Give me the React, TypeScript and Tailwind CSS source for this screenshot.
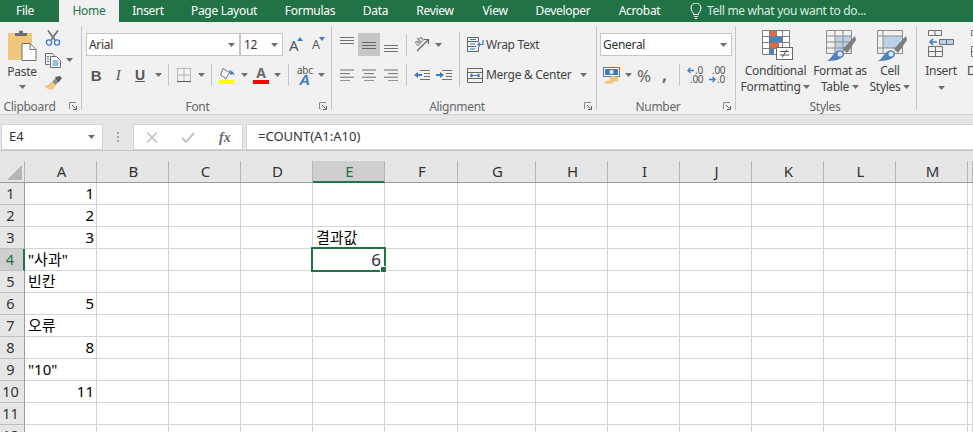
import React from "react";

const UI = '"Noto Sans","Noto Sans CJK KR",sans-serif';

function Caret({ className = "" }: { className?: string }) {
  return (
    <svg width="7" height="4" viewBox="0 0 7 4" className={`block shrink-0 ${className}`}>
      <path d="M0 0H7L3.5 4Z" fill="#6e6e6e" />
    </svg>
  );
}

function Launcher({ className = "" }: { className?: string }) {
  return (
    <svg width="8" height="8" viewBox="0 0 8 8" className={`block shrink-0 ${className}`}>
      <path d="M0.5 7V0.5H7" fill="none" stroke="#8a8a8a" />
      <path d="M3 3L6.5 6.5M7.5 4V7.5H4" fill="none" stroke="#5f5f5f" />
    </svg>
  );
}

function Sep({ className = "" }: { className?: string }) {
  return <div className={`w-px h-[22px] bg-[#c6c6c6] shrink-0 ${className}`} />;
}

function Group({ width, label, labelShift = 0, launcher, children }: { width: string; label: string; labelShift?: number; launcher?: string; children: React.ReactNode }) {
  return (
    <div className={`${width} shrink-0 h-[84px] flex flex-col border-r border-[#c6c6c6]`}>
      <div className="h-[72px] shrink-0">{children}</div>
      <div className="relative flex-1 flex items-center justify-center text-[12px] text-[#666666]">
        <span style={{ transform: `translateX(${labelShift}px)` }}>{label}</span>
        {launcher ? <Launcher className="absolute right-[4px] top-[4px]" /> : null}
      </div>
    </div>
  );
}

function Lines({ rows, width = 14 }: { rows: [number, number][]; width?: number }) {
  return (
    <svg width={width} height="12" viewBox={`0 0 ${width} 12`} className="block shrink-0">
      {rows.map(([x, w], i) => (
        <rect key={i} x={x} y={i * 3.6 + 0.5} width={w} height="1" fill="#707070" />
      ))}
    </svg>
  );
}

const Clipboard = () => (
  <div className="flex pl-[8px] pt-[4px]">
    <div className="w-[28px] flex flex-col items-center">
      <svg width="30" height="31" viewBox="0 0 30 31" className="block shrink-0">
        <rect x="1" y="3" width="24" height="27" fill="#edc87e" />
        <path d="M8 6V3h4V0.8h4V3h4v3Z" fill="#6f6f6f" />
        <path d="M15 13.5h8l6 6v11H15Z" fill="#fff" stroke="#6f6f6f" />
        <path d="M23 13.5v6h6" fill="none" stroke="#6f6f6f" />
      </svg>
      <div className="text-[12px] text-[#444] mt-[3px] leading-[16px]">Paste</div>
      <Caret className="mt-[5px]" />
    </div>
    <div className="ml-[9px] flex flex-col">
      <svg width="16" height="16" viewBox="0 0 16 16" className="block">
        <path d="M3 0.5L10 10M13 0.5L6 10" stroke="#6d6d6d" strokeWidth="1.6" fill="none" />
        <circle cx="4" cy="12.5" r="2.6" fill="none" stroke="#3f7cbf" strokeWidth="1.3" />
        <circle cx="12" cy="12.5" r="2.6" fill="none" stroke="#3f7cbf" strokeWidth="1.3" />
      </svg>
      <div className="flex items-center mt-[7px]">
        <svg width="16" height="15" viewBox="0 0 16 15" className="block">
          <path d="M0.5 0.5h7l2 2v2M0.5 0.5v11h4" fill="none" stroke="#6d6d6d" />
          <path d="M5.5 3.5h6l4 4v7h-10Z" fill="#fff" stroke="#6d6d6d" />
          <path d="M2 3.5h2M2 6h2M2 8.5h2M7.5 8h6M7.5 10h6M7.5 12h6" stroke="#3f7cbf" />
        </svg>
        <Caret className="ml-[5px] -mt-[2px]" />
      </div>
      <svg width="17" height="15" viewBox="0 0 17 15" className="block mt-[8px]">
        <path d="M10 1l5-1 2 2-3 4-2 0Z" fill="#5e5e5e" />
        <path d="M10 2.5L13.5 6.5 10 9 7 6Z" fill="#8d8d8d" />
        <path d="M7 5.5L11 9.5 7 14 1 12 0 9 3 9.5Z" fill="#edc87e" />
      </svg>
    </div>
  </div>
);

const GrowFont = ({ up }: { up: boolean }) => (
  <div className={`relative ${up ? "w-[14px]" : "w-[13px]"} h-[16px]`}>
    <span className={`absolute left-0 bottom-0 ${up ? "text-[15px]" : "text-[12.5px]"} leading-[16px] text-[#555]`}>A</span>
    <svg width="6" height="4" viewBox="0 0 6 4" className="absolute right-0 top-0">
      <path d={up ? "M0 4L3 0L6 4Z" : "M0 0H6L3 4Z"} fill="#3f7cbf" />
    </svg>
  </div>
);

const Font = () => (
  <div className="pl-[4px] pt-[7px]">
    <div className="flex items-center">
      <div className="w-[154px] h-[23px] bg-white border border-[#c6c6c6] flex items-center pl-[2px] pr-[4px] text-[12px] text-[#333]">
        <span className="flex-1">Arial</span>
        <Caret />
      </div>
      <div className="w-[43px] h-[23px] bg-white border border-[#c6c6c6] flex items-center pl-[3px] pr-[4px] text-[12px] text-[#333]">
        <span className="flex-1">12</span>
        <Caret />
      </div>
      <div className="flex ml-[6px] gap-[9px]">
        <GrowFont up />
        <GrowFont up={false} />
      </div>
    </div>
    <div className="flex items-center h-[22px] mt-[8px]">
      <span className="w-[20px] text-center text-[15px] font-bold text-[#555] leading-none" style={{ fontFamily: '"Liberation Sans",sans-serif' }}>B</span>
      <span className="w-[20px] ml-[2px] text-center text-[15px] italic text-[#555] leading-none" style={{ fontFamily: '"Liberation Serif",serif' }}>I</span>
      <span className="w-[20px] ml-[2px] text-center text-[14px] font-bold underline text-[#555] leading-none" style={{ fontFamily: '"Liberation Sans",sans-serif' }}>U</span>
      <Caret className="ml-[5px]" />
      <Sep className="ml-[6px]" />
      <svg width="14" height="14" viewBox="0 0 14 14" className="block ml-[8px]">
        <path d="M0.5 0.5H13.5V13.5H0.5ZM0.5 7H13.5M7 0.5V13.5" fill="none" stroke="#808080" strokeDasharray="1 1" />
        <path d="M0 13.5H14" stroke="#555" />
      </svg>
      <Caret className="ml-[7px]" />
      <Sep className="ml-[6px]" />
      <svg width="17" height="17" viewBox="0 0 17 17" className="block ml-[7px]">
        <path d="M4 1.5L1.5 8 7 11.5 10.5 5.5Z" fill="#f4f4f4" stroke="#777" />
        <path d="M10 3.5c3 0 5 1.5 5.5 5L13.5 7l-2 1Z" fill="#3f7cbf" />
        <rect x="0" y="13" width="16" height="4" fill="#ffff00" />
      </svg>
      <Caret className="ml-[5px]" />
      <div className="w-[16px] h-[17px] ml-[5px] relative">
        <span className="absolute inset-x-0 -top-[2px] text-center text-[14px] font-bold text-[#6b6b6b] leading-[16px]">A</span>
        <div className="absolute inset-x-0 bottom-0 h-[4px] bg-[#ff0000]" />
      </div>
      <Caret className="ml-[5px]" />
      <Sep className="ml-[7px]" />
      <div className="w-[15px] h-[19px] ml-[8px] relative text-center">
        <span className="absolute inset-x-0 -top-[1px] text-[10px] leading-[10px] text-[#555]">abc</span>
        <span className="absolute inset-x-0 top-[7px] text-[15px] leading-[13px] font-bold italic text-[#3f7cbf]" style={{ fontFamily: '"Liberation Sans",sans-serif' }}>A</span>
      </div>
      <Caret className="ml-[6px]" />
    </div>
  </div>
);

const Alignment = () => (
  <div className="flex pl-[7px] pt-[7px]">
    <div className="w-[67px] shrink-0">
      <div className="flex h-[23px] items-center">
        <div className="w-[19px] h-[23px] pt-[3px] pl-[1px]">
          <svg width="14" height="8" viewBox="0 0 14 8" className="block"><path d="M0 1.5H14M0 4.5H14M0 7.5H14" stroke="#707070" /></svg>
        </div>
        <div className="w-[22px] h-[23px] bg-[#c6c6c6] flex items-center justify-center">
          <svg width="14" height="8" viewBox="0 0 14 8" className="block"><path d="M0 1.5H14M0 4.5H14M0 7.5H14" stroke="#666" /></svg>
        </div>
        <div className="w-[22px] h-[23px] pt-[11px] pl-[4px]">
          <svg width="14" height="8" viewBox="0 0 14 8" className="block"><path d="M0 1.5H14M0 4.5H14M0 7.5H14" stroke="#707070" /></svg>
        </div>
      </div>
      <div className="flex items-center mt-[13px] pl-px gap-[8px]">
        <Lines rows={[[0, 14], [0, 10], [0, 14], [0, 10]]} />
        <Lines rows={[[0, 14], [2, 10], [0, 14], [2, 10]]} />
        <Lines rows={[[0, 14], [4, 10], [0, 14], [4, 10]]} />
      </div>
    </div>
    <div className="w-[53px] shrink-0">
      <div className="flex items-center h-[23px]">
        <Sep />
        <div className="relative w-[17px] h-[17px] ml-[7px]">
          <span className="absolute left-0 top-0 text-[9px] leading-[10px] text-[#666] -rotate-45" style={{ fontFamily: '"Liberation Sans",sans-serif' }}>ab</span>
          <svg width="17" height="17" viewBox="0 0 17 17" className="absolute left-0 top-0">
            <path d="M3 15L14 4M10 3.5h4.5V8" fill="none" stroke="#666" strokeWidth="1.2" />
          </svg>
        </div>
        <Caret className="ml-[4px]" />
      </div>
      <div className="flex items-center h-[22px] mt-[8px]">
        <Sep />
        <svg width="16" height="12" viewBox="0 0 16 12" className="block ml-[7px]">
          <path d="M6 1.5H16M10 4.5H16M10 7.5H16M6 10.5H16" stroke="#707070" />
          <path d="M0 6L4 3V5H8V7H4V9Z" fill="#3f7cbf" />
        </svg>
        <svg width="16" height="12" viewBox="0 0 16 12" className="block ml-[6px]">
          <path d="M6 1.5H16M10 4.5H16M10 7.5H16M6 10.5H16" stroke="#707070" />
          <path d="M8 6L4 3V5H0V7H4V9Z" fill="#3f7cbf" />
        </svg>
      </div>
    </div>
    <div className="w-px h-[55px] bg-[#c6c6c6] shrink-0 -mt-[1px]" />
    <div className="pl-[7px] text-[12px] text-[#444]">
      <div className="flex items-center h-[23px]">
        <svg width="17" height="15" viewBox="0 0 17 15" className="block">
          <path d="M0.5 0.5H11.5V4.5H0.5ZM0.5 4.5V14.5H11.5V10M0.5 9.5H9" fill="none" stroke="#666" />
          <path d="M3 2.5H9M3 7H8M3 12H8" stroke="#3f7cbf" />
          <path d="M16 3V7.5H11M13 5.5L11 7.5 13 9.5" fill="none" stroke="#3f7cbf" strokeWidth="1.2" />
        </svg>
        <span className="ml-[2px]">Wrap Text</span>
      </div>
      <div className="flex items-center h-[22px] mt-[8px]">
        <svg width="16" height="15" viewBox="0 0 16 15" className="block">
          <path d="M0.5 0.5H15.5V14.5H0.5ZM0.5 4.5H15.5M0.5 10.5H15.5" fill="none" stroke="#666" />
          <path d="M3 7.5H13M3 7.5L5 5.8V9.2ZM13 7.5L11 5.8V9.2Z" fill="#3f7cbf" stroke="#3f7cbf" />
        </svg>
        <span className="ml-[3px] w-[91px] shrink-0">Merge &amp; Center</span>
        <Caret className="ml-[3px]" />
      </div>
    </div>
  </div>
);

const NumberGroup = () => (
  <div className="pl-[3px] pt-[7px]">
    <div className="w-[132px] h-[23px] bg-white border border-[#c6c6c6] flex items-center pl-[2px] pr-[4px] text-[12px] text-[#333]">
      <span className="flex-1">General</span>
      <Caret />
    </div>
    <div className="flex items-center h-[22px] mt-[8px] pl-[3px]">
      <svg width="17" height="17" viewBox="0 0 17 17" className="block">
        <rect x="0.5" y="0.5" width="16" height="9" fill="#fff" stroke="#3f7cbf" />
        <rect x="2" y="2" width="13" height="6" fill="#3f7cbf" />
        <circle cx="8.5" cy="5" r="2" fill="#fff" />
        <ellipse cx="11" cy="10.5" rx="4.5" ry="1.5" fill="#edc87e" />
        <ellipse cx="11" cy="13" rx="4.5" ry="1.5" fill="#edc87e" />
        <ellipse cx="6" cy="15.3" rx="4.5" ry="1.5" fill="#edc87e" />
      </svg>
      <Caret className="ml-[5px]" />
      <span className="ml-[5px] w-[15px] text-[17px] text-[#666] leading-none">%</span>
      <span className="ml-[10px] w-[8px] text-[17px] font-bold text-[#666] leading-none -mt-[2px]">,</span>
      <Sep className="ml-[9px]" />
      <div className="w-[15px] ml-[7px] relative h-[16px] text-[10px] leading-[8px] text-[#555]">
        <svg width="7" height="7" viewBox="0 0 7 7" className="absolute left-0 top-[0px]"><path d="M7 3.5H1M3.5 1L1 3.5 3.5 6" fill="none" stroke="#3f7cbf" strokeWidth="1.3" /></svg>
        <span className="absolute left-[8px] -top-[1px]">.0</span>
        <span className="absolute left-[3px] top-[8px]">.00</span>
      </div>
      <div className="w-[15px] ml-[7px] relative h-[16px] text-[10px] leading-[8px] text-[#555]">
        <span className="absolute left-[3px] -top-[1px]">.00</span>
        <svg width="7" height="7" viewBox="0 0 7 7" className="absolute left-0 top-[9px]"><path d="M0 3.5H6M3.5 1L6 3.5 3.5 6" fill="none" stroke="#3f7cbf" strokeWidth="1.3" /></svg>
        <span className="absolute left-[8px] top-[8px]">.0</span>
      </div>
    </div>
  </div>
);

const CF = () => (
  <svg width="31" height="31" viewBox="0 0 31 31" className="block">
    <path d="M0.5 0.5H27.5V24.5H0.5ZM0.5 6.5H27.5M0.5 12.5H27.5M0.5 18.5H27.5M7.5 0.5V24.5M14.5 0.5V24.5M20.5 0.5V24.5" fill="#fff" stroke="#7d7d7d" />
    <rect x="8" y="1" width="6" height="5" fill="#dd6a45" />
    <rect x="8" y="7" width="12" height="5" fill="#4f81bd" />
    <rect x="8" y="13" width="9" height="5" fill="#dd6a45" />
    <rect x="8" y="19" width="4" height="6" fill="#4f81bd" />
    <rect x="14.5" y="17.5" width="16" height="12" fill="#fff" stroke="#6a6a6a" />
    <path d="M18 21.5H27M18 25H27M25 19.5L20 27.5" stroke="#555" fill="none" />
  </svg>
);

const Brush = () => (
  <>
    <path d="M17 19L27 8 29 6 30 10 21 23Z" fill="#7d7d7d" />
    <path d="M0 31C5 30 6 24 11 21 15 19 19 22 18 25 16 30 8 31 0 31Z" fill="#4f81bd" />
    <circle cx="14" cy="24" r="2.5" fill="#fff" opacity="0.8" />
  </>
);

const FT = () => (
  <svg width="31" height="31" viewBox="0 0 31 31" className="block">
    <rect x="9" y="6" width="17" height="16" fill="#bcd0e6" />
    <path d="M0.5 0.5H25.5V23.5H0.5ZM0.5 6H25.5M0.5 12H25.5M0.5 18H25.5M9 0.5V23.5M17 0.5V23.5" fill="none" stroke="#8d8d8d" />
    <Brush />
  </svg>
);

const CS = () => (
  <svg width="31" height="31" viewBox="0 0 31 31" className="block">
    <rect x="6" y="6" width="20" height="12" fill="#bcd0e6" />
    <path d="M0.5 0.5H25.5V23.5H0.5ZM0.5 6H25.5M0.5 18H25.5M6 0.5V23.5" fill="none" stroke="#8d8d8d" />
    <Brush />
  </svg>
);

const InsertIcon = () => (
  <svg width="28" height="27" viewBox="0 0 28 27" className="block">
    <path d="M1.5 0.5H14.5V5.5H1.5ZM8 0.5V5.5M1.5 16.5H15.5V26.5H1.5ZM1.5 21.5H15.5M8.5 16.5V26.5" fill="none" stroke="#6f6f6f" />
    <path d="M12.5 9.5H26.5V14.5H12.5ZM19.5 9.5V14.5" fill="#bcd0e6" stroke="#6f6f6f" />
    <path d="M10 12H3M6 9L3 12 6 15" fill="none" stroke="#3f7cbf" strokeWidth="1.5" />
  </svg>
);

const Styles = () => (
  <div className="flex pt-[4px] text-[12px] text-[#444] leading-[16px] text-center">
    <div className="w-[73px] ml-[3px] flex flex-col items-center shrink-0">
      <div className="h-[31px] w-[31px] ml-[4px]"><CF /></div>
      <div className="mt-[2px] whitespace-nowrap">Conditional</div>
      <div className="flex items-center whitespace-nowrap">Formatting<Caret className="ml-[3px]" /></div>
    </div>
    <div className="w-[56px] flex flex-col items-center shrink-0">
      <div className="h-[31px] w-[31px] ml-[3px]"><FT /></div>
      <div className="mt-[2px] whitespace-nowrap">Format as</div>
      <div className="flex items-center whitespace-nowrap">Table<Caret className="ml-[3px]" /></div>
    </div>
    <div className="w-[44px] flex flex-col items-center shrink-0">
      <div className="h-[31px] w-[31px] ml-[4px]"><CS /></div>
      <div className="mt-[2px] whitespace-nowrap">Cell</div>
      <div className="flex items-center whitespace-nowrap">Styles<Caret className="ml-[3px]" /></div>
    </div>
  </div>
);

const Cells = () => (
  <div className="flex pt-[4px] text-[12px] text-[#444] leading-[16px] overflow-hidden">
    <div className="w-[48px] flex flex-col items-center shrink-0">
      <div className="h-[31px]"><InsertIcon /></div>
      <div className="mt-[2px]">Insert</div>
      <Caret className="mt-[7px]" />
    </div>
    <div className="flex flex-col shrink-0 ml-[2px]">
      <svg width="10" height="27" viewBox="0 0 10 27" className="block mb-[4px]"><path d="M4.5 0.5H10V5.5H4.5ZM4.5 16.5H10V26.5H4.5ZM4.5 21.5H10" fill="none" stroke="#6f6f6f" /></svg>
      <div className="mt-[2px]">D</div>
    </div>
  </div>
);

const COLS: [string, number][] = [
  ["A", 72], ["B", 72], ["C", 72], ["D", 72], ["E", 72], ["F", 73], ["G", 78], ["H", 72],
  ["I", 72], ["J", 72], ["K", 72], ["L", 72], ["M", 72], ["", 5],
];

const TEXT: Record<string, { t: string; right?: boolean }> = {
  "1A": { t: "1", right: true },
  "2A": { t: "2", right: true },
  "3A": { t: "3", right: true },
  "4A": { t: '"사과"' },
  "5A": { t: "빈칸" },
  "6A": { t: "5", right: true },
  "7A": { t: "오류" },
  "8A": { t: "8", right: true },
  "9A": { t: '"10"' },
  "10A": { t: "11", right: true },
  "3E": { t: "결과값" },
  "4E": { t: "6", right: true },
};

const TABS: [string, number][] = [
  ["Insert", 58], ["Page Layout", 94], ["Formulas", 78], ["Data", 53], ["Review", 66],
  ["View", 54], ["Developer", 82], ["Acrobat", 71],
];

export default function App() {
  const rows = Array.from({ length: 12 }, (_, i) => i + 1);
  return (
    <div className="w-[973px] h-[432px] overflow-hidden bg-white" style={{ fontFamily: UI }}>
      <div className="h-[22px] bg-[#217346] flex text-[12px] tracking-[-0.3px] text-white items-center">
        <div className="w-[59px] shrink-0 h-full pr-[9px] flex items-center justify-center">File</div>
        <div className="w-[60px] shrink-0 h-full bg-[#f1f1f1] text-[#217346] flex items-center justify-center">Home</div>
        {TABS.map(([t, w]) => (
          <div key={t} className="shrink-0 h-full flex items-center justify-center" style={{ width: w }}>{t}</div>
        ))}
        <svg width="12" height="16" viewBox="0 0 12 16" className="block shrink-0 ml-[15px]">
          <path d="M3.5 11.5C3.5 9 1 8 1 5a5 5 0 0 1 10 0c0 3-2.5 4-2.5 6.5ZM4 13.5H8M5 15.5H7" fill="none" stroke="#fff" />
        </svg>
        <span className="ml-[5px] text-[#dcebe2] whitespace-nowrap">Tell me what you want to do...</span>
      </div>
      <div className="h-[93px] bg-[#f1f1f1] border-b border-[#d2d2d2] flex pt-[4px] overflow-hidden tracking-[-0.3px]">
        <Group width="w-[82px]" label="Clipboard" labelShift={-11} launcher="y"><Clipboard /></Group>
        <Group width="w-[250px]" label="Font" labelShift={-9} launcher="y"><Font /></Group>
        <Group width="w-[265px]" label="Alignment" labelShift={-7} launcher="y"><Alignment /></Group>
        <Group width="w-[139px]" label="Number" labelShift={-8} launcher="y"><NumberGroup /></Group>
        <Group width="w-[181px]" label="Styles" labelShift={-1}><Styles /></Group>
        <div className="flex-1 min-w-0"><Cells /></div>
      </div>
      <div className="h-[36px] bg-[#e6e6e6] border-b border-[#c6c6c6] flex items-end text-[13px] text-[#333]">
        <div className="w-[102px] h-[26px] ml-px bg-white border border-[#d4d4d4] flex items-center pl-[7px] pr-[7px] shrink-0">
          <span className="flex-1">E4</span>
          <Caret />
        </div>
        <div className="w-[30px] h-[26px] flex flex-col items-center justify-center gap-[2px] shrink-0">
          <i className="block w-[2px] h-[2px] bg-[#a8a8a8]" /><i className="block w-[2px] h-[2px] bg-[#a8a8a8]" /><i className="block w-[2px] h-[2px] bg-[#a8a8a8]" />
        </div>
        <div className="w-[110px] h-[26px] bg-white border border-[#d4d4d4] flex items-center shrink-0 pl-[12px]">
          <svg width="12" height="11" viewBox="0 0 12 11" className="block"><path d="M1 0.5L11 10.5M11 0.5L1 10.5" stroke="#c4c4c4" strokeWidth="1.6" /></svg>
          <svg width="14" height="11" viewBox="0 0 14 11" className="block ml-[23px]"><path d="M1 6L5 10 13 1" fill="none" stroke="#c4c4c4" strokeWidth="2" /></svg>
          <span className="ml-[24px] text-[14px] italic font-bold text-[#666]" style={{ fontFamily: '"Liberation Serif",serif' }}>fx</span>
        </div>
        <div className="flex-1 h-[26px] ml-[3px] bg-white border border-[#d4d4d4] border-r-0 flex items-center pl-[11px]">=COUNT(A1:A10)</div>
      </div>
      <div className="h-[10px] bg-[#e6e6e6]" />
      <div className="relative text-[15px] leading-none">
        <div className="flex h-[22px] bg-[#e6e6e6] border-b border-[#9b9b9b]">
          <div className="w-[25px] shrink-0 border-r border-[#b5b5b5] relative">
            <svg width="15" height="15" viewBox="0 0 15 15" className="absolute left-[7px] top-[4px]"><path d="M15 0V15H0Z" fill="#b6b6b6" /></svg>
          </div>
          {COLS.map(([c, w]) => (
            <div
              key={c || "x"}
              className={`shrink-0 flex items-center justify-center pl-[2px] text-[#333] ${c === "E" ? "bg-[#cfcfcf] text-[#217346] border-b-2 border-[#217346] h-[22px] border-r border-r-[#b5b5b5]" : "border-r border-[#b5b5b5]"}`}
              style={{ width: w }}
            >
              {c}
            </div>
          ))}
        </div>
        {rows.map((r) => (
          <div key={r} className="flex h-[22px]">
            <div className={`w-[25px] shrink-0 flex items-center justify-center pr-[3px] border-b border-[#c0c0c0] border-r text-[14.5px] ${r === 4 ? "bg-[#cfcfcf] text-[#217346] border-r-2 border-r-[#217346]" : "bg-[#e6e6e6] text-[#333] border-r-[#9b9b9b]"}`}>{r}</div>
            {COLS.map(([c, w]) => {
              const cell = TEXT[`${r}${c}`];
              const six = r === 4 && c === "E";
              return (
                <div
                  key={c || "x"}
                  className={`shrink-0 border-r border-b border-[#d4d4d4] flex items-center whitespace-nowrap ${six ? "text-[17px] text-[#333] justify-end pr-[3px]" : cell?.right ? "text-black justify-end pr-[2px]" : "text-black pl-[3px]"}`}
                  style={{ width: w }}
                >
                  {cell?.t}
                </div>
              );
            })}
          </div>
        ))}
        <div className="absolute left-[311px] top-[86px] w-[75px] h-[25px] border-2 border-[#217346]">
          <div className="absolute -right-[3px] -bottom-[3px] w-[5px] h-[5px] bg-[#217346] border border-white box-content" />
        </div>
      </div>
    </div>
  );
}
